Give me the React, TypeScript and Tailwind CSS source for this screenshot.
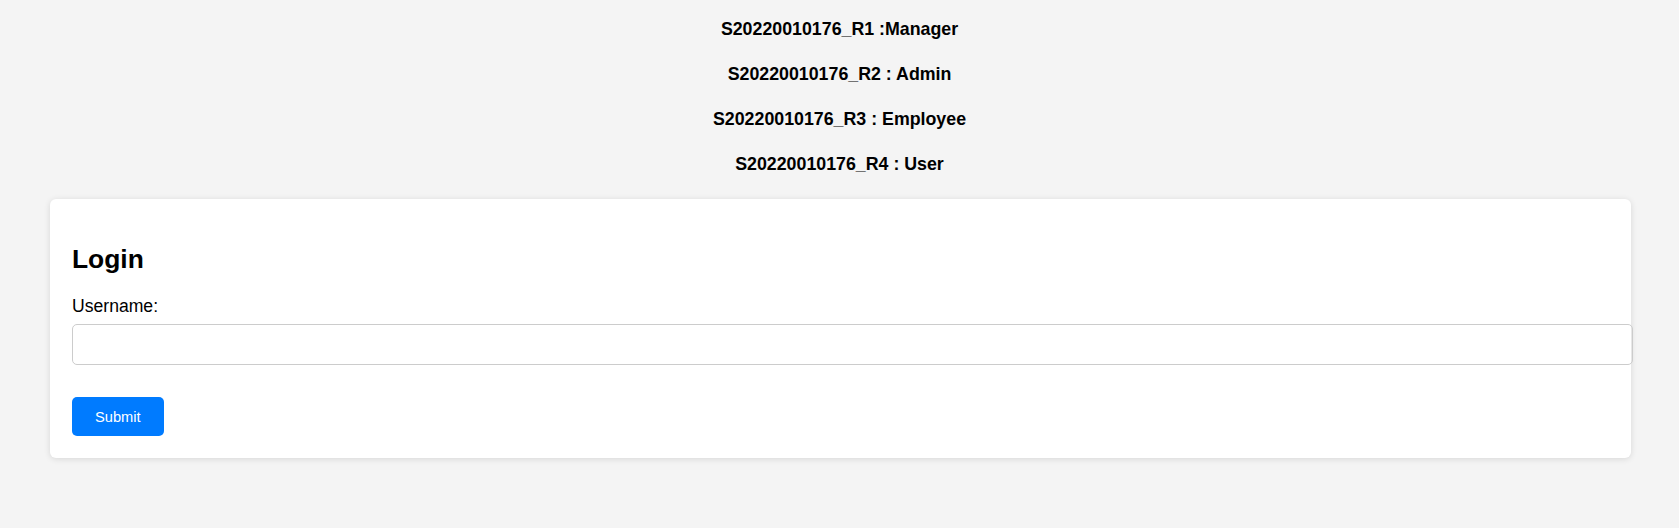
import React, { useState } from 'react';

const ROLES = [
  'S20220010176_R1 :Manager',
  'S20220010176_R2 : Admin',
  'S20220010176_R3 : Employee',
  'S20220010176_R4 : User',
];

export default function App() {
  const [username, setUsername] = useState('');

  return (
    <div className="min-h-screen bg-[#f4f4f4] font-['Liberation_Sans',Arial,sans-serif] text-black">
      <div className="flex flex-col items-center gap-[25px] pt-[19px]">
        {ROLES.map((r) => (
          <h4 key={r} className="text-[17.8px] leading-[20px] font-bold">
            {r}
          </h4>
        ))}
      </div>

      <div className="ml-[50px] mt-[25px] w-[1581px] rounded-[6px] bg-white p-[22px] shadow-[0_1px_6px_rgba(0,0,0,0.12)]">
        <h2 className="mt-[23px] mb-[22px] text-[26.4px] leading-[30px] font-bold">Login</h2>
        <form onSubmit={(e) => e.preventDefault()}>
          <label htmlFor="username" className="block text-[17.6px] leading-[20px]">
            Username:
          </label>
          <input
            id="username"
            value={username}
            onChange={(e) => setUsername(e.target.value)}
            className="mt-[8px] box-content block h-[17px] w-full rounded-[5px] border border-[#ccc] p-[11px] text-[14.67px] outline-none"
          />
          <button
            type="submit"
            className="mt-[32px] h-[39px] rounded-[5px] bg-[#007bff] px-[23px] text-[14.67px] text-white"
          >
            Submit
          </button>
        </form>
      </div>
    </div>
  );
}
